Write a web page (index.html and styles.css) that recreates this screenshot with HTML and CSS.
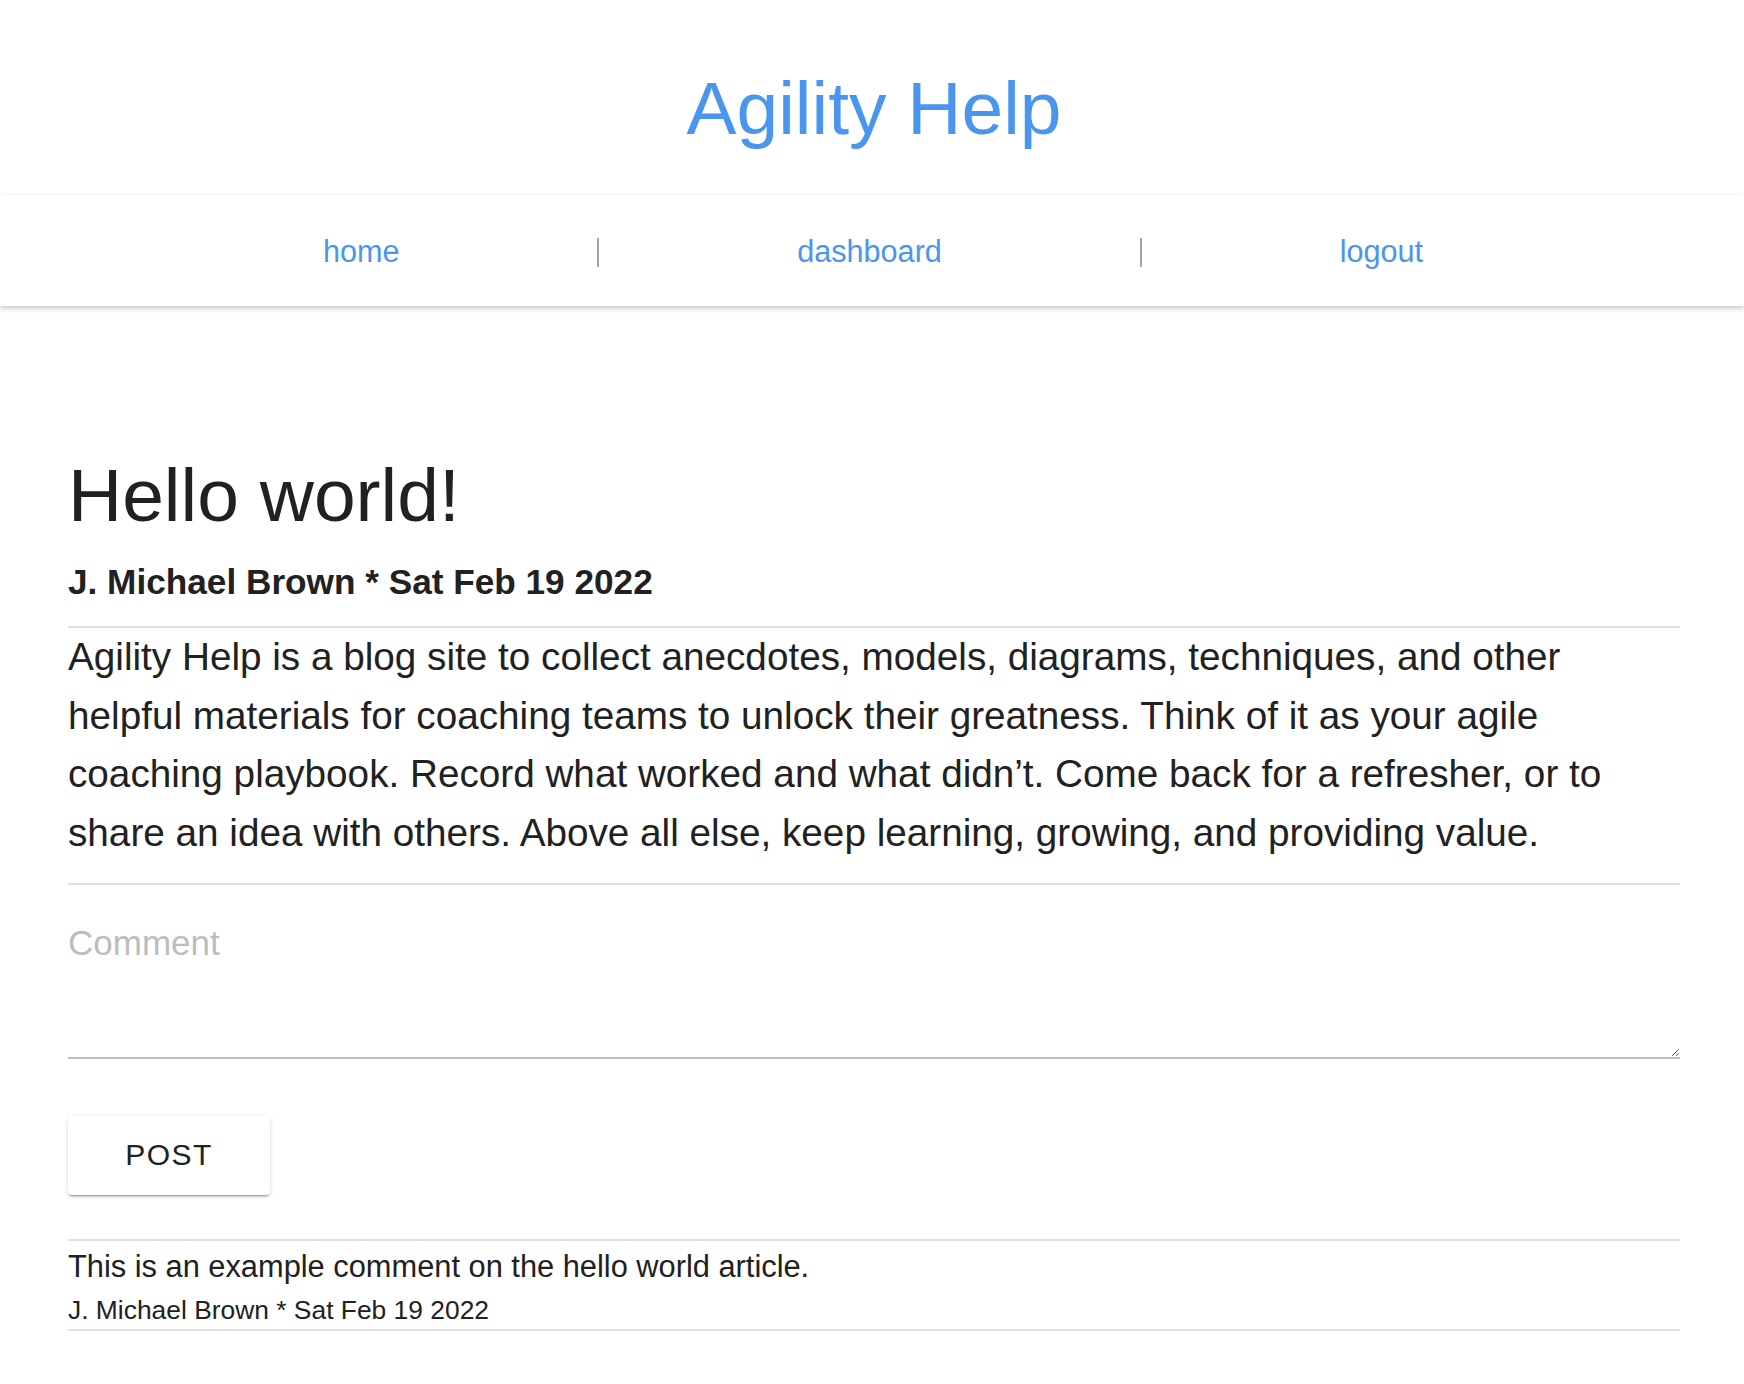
FILE: index.html
```html
<!DOCTYPE html>
<html lang="en">
<head>
<meta charset="utf-8">
<title>Agility Help</title>
<link rel="stylesheet" href="styles.css">
</head>
<body>
<header class="site-header">
  <h1 class="site-title">Agility Help</h1>
</header>
<nav class="site-nav">
  <div class="nav-inner">
    <a class="nav-link" href="#">home</a>
    <span class="nav-sep"></span>
    <a class="nav-link" href="#">dashboard</a>
    <span class="nav-sep"></span>
    <a class="nav-link" href="#">logout</a>
  </div>
</nav>
<main class="article">
  <h2 class="article-title">Hello world!</h2>
  <div class="article-byline">J. Michael Brown * Sat Feb 19 2022</div>
  <p class="article-body">Agility Help is a blog site to collect anecdotes, models, diagrams, techniques, and other helpful materials for coaching teams to unlock their greatness. Think of it as your agile coaching playbook. Record what worked and what didn’t. Come back for a refresher, or to share an idea with others. Above all else, keep learning, growing, and providing value.</p>
  <form class="comment-form">
    <textarea class="comment-input" placeholder="Comment"></textarea>
    <button type="button" class="post-btn">POST</button>
  </form>
  <div class="comments">
    <div class="comment">
      <div class="comment-text">This is an example comment on the hello world article.</div>
      <div class="comment-meta">J. Michael Brown * Sat Feb 19 2022</div>
    </div>
  </div>
</main>
</body>
</html>
```

FILE: styles.css
```css
* { box-sizing: border-box; }

body {
  margin: 0;
  background: #ffffff;
  color: #212121;
  font-family: "Liberation Sans", Arial, sans-serif;
}

.site-header {
  height: 195px;
  padding-top: 71px;
  padding-left: 4px;
  text-align: center;
}

.site-title {
  margin: 0;
  font-size: 75px;
  line-height: 74px;
  font-weight: normal;
  color: #4a95ed;
}

.site-nav {
  height: 111px;
  display: flex;
  align-items: center;
  background: #fff;
  box-shadow: 0 3px 5px rgba(0, 0, 0, 0.18), 0 0 2px rgba(0, 0, 0, 0.07);
  position: relative;
}

.nav-inner {
  width: 1300px;
  margin: 0 auto;
  display: flex;
  justify-content: space-around;
  align-items: center;
  padding-left: 2px;
}

.nav-link {
  font-size: 30.6px;
  line-height: 30px;
  color: #4a95ed;
  text-decoration: none;
}

.nav-sep {
  width: 2px;
  height: 29px;
  margin-top: 4px;
  background: #a3a3a3;
}

.article {
  padding: 0 64px 0 68px;
}

.article-title {
  margin: 152px 0 0;
  font-size: 75px;
  line-height: 74px;
  font-weight: normal;
}

.article-byline {
  margin-top: 29px;
  font-size: 35.2px;
  line-height: 42px;
  font-weight: bold;
  padding-bottom: 23px;
  border-bottom: 2px solid #e0e0e0;
}

.article-body {
  margin: 0;
  font-size: 38.7px;
  line-height: 58.5px;
  padding-bottom: 21px;
  border-bottom: 2px solid #e0e0e0;
}

.comment-form {
  display: flex;
  flex-direction: column;
  align-items: flex-start;
}

.comment-input {
  display: block;
  width: 100%;
  height: 174px;
  padding: 32px 0 0;
  border: none;
  border-bottom: 2px solid #bdbdbd;
  outline: none;
  font-family: "Liberation Sans", Arial, sans-serif;
  font-size: 35px;
  line-height: 52.5px;
  color: #212121;
  background: transparent;
}

.comment-input::placeholder {
  color: #bdbdbd;
}

.post-btn {
  margin-top: 57px;
  width: 202px;
  height: 79px;
  border: none;
  border-radius: 4px;
  background: #fff;
  color: #212121;
  font-family: "Liberation Sans", Arial, sans-serif;
  font-size: 30px;
  letter-spacing: 1.4px;
  padding-bottom: 2px;
  box-shadow: 0 3px 1px -2px rgba(0, 0, 0, 0.2), 0 2px 2px 0 rgba(0, 0, 0, 0.14), 0 1px 5px 0 rgba(0, 0, 0, 0.12);
}

.comments {
  margin-top: 44px;
  border-top: 2px solid #e0e0e0;
}

.comment {
  padding-top: 7px;
  padding-bottom: 2px;
  border-bottom: 2px solid #e0e0e0;
}

.comment-text {
  font-size: 30.8px;
  line-height: 37px;
}

.comment-meta {
  margin-top: 10px;
  font-size: 26.4px;
  line-height: 31.6px;
}
```
